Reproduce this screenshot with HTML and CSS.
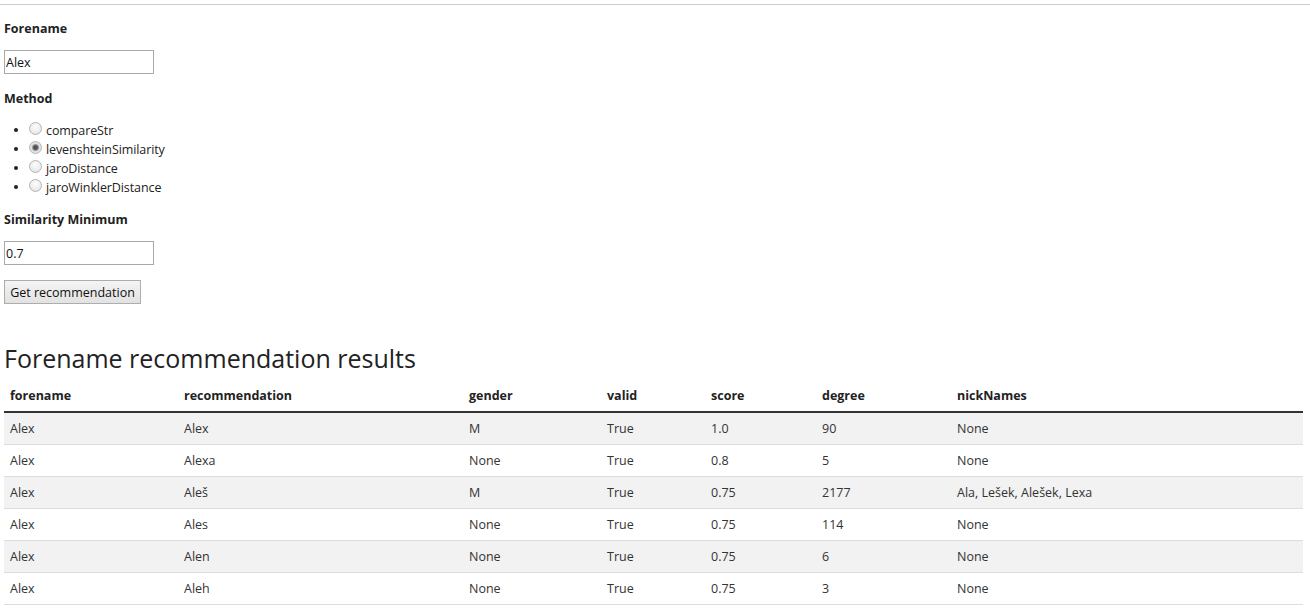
FILE: index.html
```html
<!DOCTYPE html>
<html>
<head>
<meta charset="utf-8">
<link rel="stylesheet" href="styles.css">
</head>
<body>
<hr class="top-rule">
<form class="form">
  <div class="label l-forename">Forename</div>
  <input class="field" type="text" value="Alex">
  <div class="label l-method">Method</div>
  <ul class="methods">
    <li><input class="radio" type="radio" name="m"><span>compareStr</span></li>
    <li><input class="radio" type="radio" name="m" checked><span>levenshteinSimilarity</span></li>
    <li><input class="radio" type="radio" name="m"><span>jaroDistance</span></li>
    <li><input class="radio" type="radio" name="m"><span>jaroWinklerDistance</span></li>
  </ul>
  <div class="label l-sim">Similarity Minimum</div>
  <input class="field" type="text" value="0.7">
  <button class="btn" type="button">Get recommendation</button>
</form>
<h1 class="title">Forename recommendation results</h1>
<table class="results">
  <colgroup>
    <col class="c1"><col class="c2"><col class="c3"><col class="c4"><col class="c5"><col class="c6"><col class="c7">
  </colgroup>
  <thead>
    <tr><th>forename</th><th>recommendation</th><th>gender</th><th>valid</th><th>score</th><th>degree</th><th>nickNames</th></tr>
  </thead>
  <tbody>
    <tr><td>Alex</td><td>Alex</td><td>M</td><td>True</td><td>1.0</td><td>90</td><td>None</td></tr>
    <tr><td>Alex</td><td>Alexa</td><td>None</td><td>True</td><td>0.8</td><td>5</td><td>None</td></tr>
    <tr><td>Alex</td><td>Aleš</td><td>M</td><td>True</td><td>0.75</td><td>2177</td><td>Ala, Lešek, Alešek, Lexa</td></tr>
    <tr><td>Alex</td><td>Ales</td><td>None</td><td>True</td><td>0.75</td><td>114</td><td>None</td></tr>
    <tr><td>Alex</td><td>Alen</td><td>None</td><td>True</td><td>0.75</td><td>6</td><td>None</td></tr>
    <tr><td>Alex</td><td>Aleh</td><td>None</td><td>True</td><td>0.75</td><td>3</td><td>None</td></tr>
  </tbody>
</table>
</body>
</html>
```
FILE: styles.css
```css
html, body {
  margin: 0;
  padding: 0;
  background: #fff;
}
body {
  padding: 0 7px 0 4px;
  font-family: "Open Sans", "Noto Sans", sans-serif;
  font-size: 12.5px;
  color: #222;
}
.top-rule {
  margin: 4px -7px 0 -4px;
  border: 0;
  border-top: 1px solid #ccc;
  height: 0;
}
.form {
  display: flex;
  flex-direction: column;
  align-items: flex-start;
}
.label {
  font-weight: 700;
  font-size: 12.5px;
  line-height: 18px;
  color: #222;
}
.l-forename { margin-top: 15px; margin-bottom: 12px; }
.l-method { margin-top: 16px; }
.l-sim { margin-top: 15px; margin-bottom: 12px; }
.field {
  box-sizing: border-box;
  width: 150px;
  height: 24px;
  margin: 0;
  padding: 0 1px;
  border: 1px solid #a9a9a9;
  font-family: inherit;
  font-size: 12.5px;
  color: #111;
  background: #fff;
  outline: none;
}
.methods {
  margin: 12px 0 0 0;
  padding: 0 0 0 25px;
  list-style: disc;
}
.methods li {
  height: 19px;
  line-height: 19px;
  display: list-item;
  letter-spacing: -0.1px;
}
.methods li span {
  margin-left: 4px;
  vertical-align: middle;
}
.radio {
  -webkit-appearance: none;
  appearance: none;
  box-sizing: border-box;
  width: 13px;
  height: 13px;
  margin: 0;
  border: 1px solid #b4b4b4;
  border-radius: 50%;
  background: radial-gradient(circle at 50% 35%, #fdfdfd 0%, #ececec 60%, #dcdcdc 100%);
  vertical-align: middle;
  position: relative;
  top: -2px;
}
.radio:checked {
  background: radial-gradient(circle, #4a4a4a 0, #5a5a5a 2px, #9a9a9a 3px, #dedede 4px, #eeeeee 100%);
}
.btn {
  margin-top: 15px;
  box-sizing: border-box;
  height: 24px;
  width: 137px;
  padding: 0;
  border: 1px solid #adadad;
  border-radius: 0;
  background: linear-gradient(#f4f4f4, #e2e2e2);
  font-family: inherit;
  font-size: 12.5px;
  color: #111;
}
.title {
  margin: 38px 0 0 0;
  font-size: 25px;
  font-weight: 400;
  line-height: 32px;
  color: #222;
}
.results {
  margin-top: 5px;
  width: 1299px;
  border-collapse: collapse;
  table-layout: fixed;
  color: #333;
}
.c1 { width: 174px; }
.c2 { width: 285px; }
.c3 { width: 138px; }
.c4 { width: 104px; }
.c5 { width: 111px; }
.c6 { width: 135px; }
.c7 { width: 352px; }
.results th {
  text-align: left;
  font-weight: 700;
  color: #222;
  height: 31px;
  padding: 1px 6px 0;
  border-bottom: 2px solid #333;
}
.results td {
  height: 31px;
  padding: 0 6px;
  border-bottom: 1px solid #ddd;
}
.results tbody tr:nth-child(odd) td {
  background: #f2f2f2;
}
```
